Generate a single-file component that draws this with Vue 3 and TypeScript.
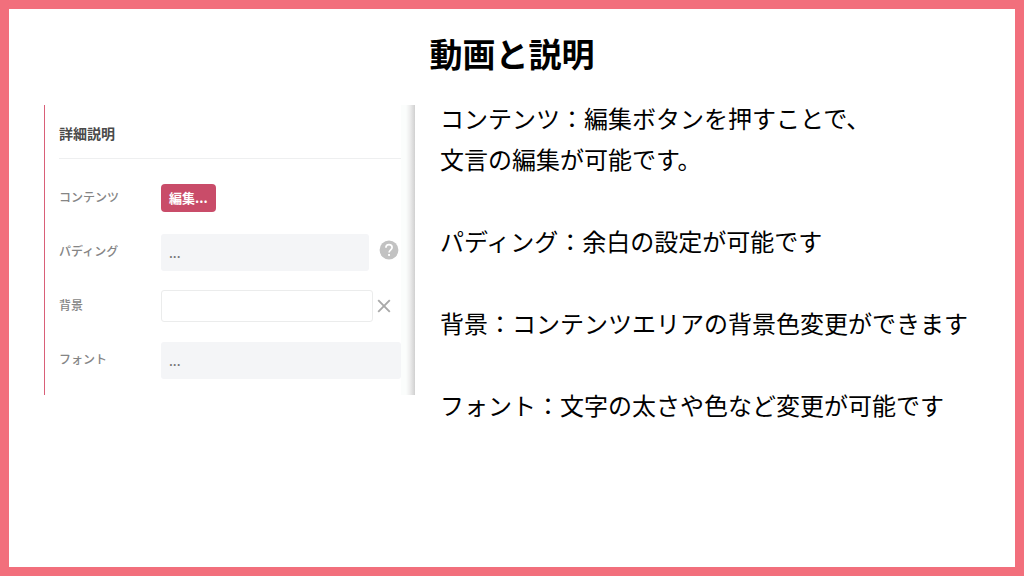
<script setup lang="ts">
import { ref } from 'vue'

interface Note {
  term: string
  lines: string[]
}

const notes: Note[] = [
  { term: 'コンテンツ', lines: ['編集ボタンを押すことで、', '文言の編集が可能です。'] },
  { term: 'パディング', lines: ['余白の設定が可能です'] },
  { term: '背景', lines: ['コンテンツエリアの背景色変更ができます'] },
  { term: 'フォント', lines: ['文字の太さや色など変更が可能です'] },
]

const padding = ref('...')
const background = ref('')
const font = ref('...')
</script>

<template>
  <main class="slide">
    <h1 class="title">動画と説明</h1>
    <div class="columns">
      <section class="panel">
        <form class="form" @submit.prevent>
          <h2 class="heading">詳細説明</h2>
          <div class="row">
            <label class="label" for="content">コンテンツ</label>
            <button id="content" class="edit" type="button">編集...</button>
          </div>
          <div class="row">
            <label class="label" for="padding">パディング</label>
            <input id="padding" v-model="padding" class="field" type="text" />
            <button class="icon help" type="button" aria-label="ヘルプ">
              <svg viewBox="0 0 20 20" width="20" height="20">
                <circle cx="10" cy="10" r="9.4" fill="#c2c2c2" />
                <path
                  d="M6.9 7.8C6.9 5.8 8.2 4.6 10 4.6s3.1 1.2 3.1 2.9c0 2.2-3 2.5-3 5"
                  fill="none"
                  stroke="#fff"
                  stroke-width="1.7"
                />
                <rect x="9.1" y="14" width="1.9" height="1.9" fill="#fff" />
              </svg>
            </button>
          </div>
          <div class="row">
            <label class="label" for="background">背景</label>
            <input id="background" v-model="background" class="field outlined" type="text" />
            <button class="icon clear" type="button" aria-label="クリア" @click="background = ''">
              <svg viewBox="0 0 14 14" width="14" height="14">
                <path d="M1.2 1.2l11.6 11.6M12.8 1.2L1.2 12.8" stroke="#a9a9a9" stroke-width="1.9" />
              </svg>
            </button>
          </div>
          <div class="row">
            <label class="label" for="font">フォント</label>
            <input id="font" v-model="font" class="field" type="text" />
          </div>
        </form>
        <div class="edge"></div>
      </section>
      <section class="notes">
        <p v-for="note in notes" :key="note.term" class="note">
          {{ note.term }}：<template v-for="(line, i) in note.lines" :key="i"><br v-if="i > 0" />{{ line }}</template>
        </p>
      </section>
    </div>
  </main>
</template>

<style>
body {
  margin: 0;
}
</style>

<style scoped>
.slide {
  box-sizing: border-box;
  min-height: 100vh;
  border: 9px solid #f26f7c;
  padding: 20px 27px 24px 35px;
  background: #fff;
  color: #000;
  font-family: "Noto Sans CJK JP", sans-serif;
}
.title {
  margin: 0;
  font-size: 33px;
  line-height: 48px;
  font-weight: 700;
  text-align: center;
  padding-right: 8px;
}
.columns {
  display: grid;
  grid-template-columns: minmax(0, 371fr) minmax(0, 548fr);
  column-gap: 25px;
  align-items: start;
  padding-top: 20px;
}
.panel {
  display: flex;
  margin-top: 8px;
  border-left: 1px solid #d95f78;
}
.form {
  flex: 1;
  min-width: 0;
  padding: 0 0 8px 14px;
}
.heading {
  margin: 0 0 12px;
  padding: 16px 0 13px;
  border-bottom: 1px solid #eeeff0;
  color: #4a4a4a;
  font-size: 14px;
  line-height: 24px;
  font-weight: 700;
}
.row {
  display: flex;
  align-items: center;
  height: 54px;
}
.label {
  flex: 0 0 102px;
  padding-bottom: 2px;
  color: #858585;
  font-size: 12px;
  line-height: 18px;
  font-weight: 500;
}
.edit {
  height: 28px;
  padding: 0 8px;
  border: 0;
  border-radius: 4px;
  background: #c94c69;
  color: #fff;
  font-family: inherit;
  font-size: 13px;
  line-height: 28px;
  font-weight: 700;
}
.field {
  flex: 1;
  box-sizing: border-box;
  min-width: 0;
  height: 37px;
  padding: 0 8px;
  border: 0;
  border-radius: 3px;
  background: #f4f5f7;
  color: #777;
  font-family: inherit;
  font-size: 13px;
  font-weight: 500;
}
.outlined {
  height: 32px;
  border: 1px solid #ebecec;
  background: #fff;
}
.icon {
  display: flex;
  padding: 0;
  border: 0;
  background: none;
}
.help {
  margin: 0 2px 4px 10px;
}
.clear {
  margin: 0 10px 0 4px;
}
.edge {
  flex: 0 0 14px;
  background: linear-gradient(to right, #fbfdfc 0, #fbfdfc 5px, #ededed 9px, #d0d0d0 100%);
}
.notes {
  display: grid;
  row-gap: 41px;
}
.note {
  margin: 0;
  font-size: 24px;
  line-height: 41px;
}
</style>
